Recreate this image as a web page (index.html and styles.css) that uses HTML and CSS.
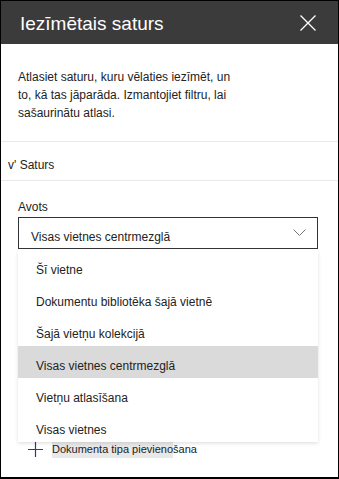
FILE: index.html
```html
<!DOCTYPE html>
<html lang="lv">
<head>
    <meta charset="UTF-8">
    <meta name="viewport" content="width=device-width, initial-scale=1.0">
    <title>Iezīmētais saturs</title>
    <link rel="stylesheet" href="styles.css">
</head>
<body>
    <div class="panel">
        <div class="panel-header">
            <h1>Iezīmētais saturs</h1>
            <button class="close" aria-label="Aizvērt">
                <svg width="16" height="16" viewBox="0 0 16 16">
                    <path d="M0.5 0.5 L15.5 15.5 M15.5 0.5 L0.5 15.5" stroke="#fff" stroke-width="1.3" fill="none"/>
                </svg>
            </button>
        </div>
        <p class="intro">Atlasiet saturu, kuru vēlaties iezīmēt, un to, kā tas jāparāda. Izmantojiet filtru, lai sašaurinātu atlasi.</p>
        <div class="section-toggle">v' Saturs</div>
        <div class="field">
            <label class="field-label">Avots</label>
            <div class="dropdown">
                <div class="dropdown-box">
                    <span>Visas vietnes centrmezglā</span>
                    <svg class="chevron" width="13" height="7" viewBox="0 0 13 7">
                        <path d="M0.5 0.5 L6.5 6.5 L12.5 0.5" stroke="#777" stroke-width="1" fill="none"/>
                    </svg>
                </div>
                <ul class="dropdown-list">
                    <li>Šī vietne</li>
                    <li>Dokumentu bibliotēka šajā vietnē</li>
                    <li>Šajā vietņu kolekcijā</li>
                    <li class="selected">Visas vietnes centrmezglā</li>
                    <li>Vietņu atlasīšana</li>
                    <li>Visas vietnes</li>
                </ul>
            </div>
            <div class="add-row">
                <svg class="plus" width="15" height="15" viewBox="0 0 15 15">
                    <path d="M7.5 0 V15 M0 7.5 H15" stroke="#2b3a80" stroke-width="1.2" fill="none"/>
                </svg>
                <span class="add-text"><span class="hover">Dokumenta tipa pievieno</span>šana</span>
            </div>
        </div>
    </div>
</body>
</html>
```

FILE: styles.css
```css
body {
    margin: 0;
    font-family: "Liberation Sans", Arial, sans-serif;
    color: #222;
}
.panel {
    box-sizing: border-box;
    width: 339px;
    height: 479px;
    border: 1px solid #000;
    border-bottom-width: 2px;
    background-color: #fff;
    overflow: hidden;
}
.panel-header {
    height: 43px;
    background-color: #3b3b3b;
    display: flex;
    align-items: center;
    justify-content: space-between;
    padding: 0 22px 0 19px;
}
.panel-header h1 {
    margin: 0;
    padding-top: 3px;
    font-size: 19px;
    line-height: 22px;
    font-weight: normal;
    color: #fff;
}
.close {
    border: none;
    background: none;
    padding: 0;
    width: 16px;
    height: 16px;
    display: flex;
}
.intro {
    margin: 24px 0 19px 17px;
    max-width: 222px;
    font-size: 12px;
    line-height: 18px;
}
.section-toggle {
    border-top: 1px solid #e9e9e9;
    border-bottom: 1px solid #e9e9e9;
    padding: 14px 7px 6px;
    font-size: 12px;
    line-height: 18px;
}
.field {
    padding: 0 20px 0 17px;
    font-size: 12px;
}
.field-label {
    display: block;
    margin-top: 17px;
    margin-bottom: 1px;
    line-height: 18px;
}
.dropdown {
    position: relative;
    width: 300px;
}
.dropdown-box {
    box-sizing: border-box;
    height: 32px;
    border: 1px solid #333;
    padding: 8px 11px 0 12px;
    line-height: 22px;
    display: flex;
    justify-content: space-between;
}
.chevron {
    margin-top: 3px;
}
.dropdown-list {
    position: absolute;
    left: 0;
    top: calc(100% + 1px);
    width: 300px;
    margin: 0;
    padding: 0;
    list-style: none;
    background-color: #fff;
    box-shadow: 0 1.6px 3.6px rgba(0, 0, 0, 0.13), 0 0.3px 0.9px rgba(0, 0, 0, 0.11);
    z-index: 2;
}
.dropdown-list li {
    box-sizing: border-box;
    height: 32px;
    padding: 9px 18px 0;
    line-height: 22px;
}
.dropdown-list .selected {
    background-color: #dadada;
}
.add-row {
    margin-top: 193px;
    display: flex;
    align-items: center;
    gap: 9px;
    padding-left: 10px;
    height: 15px;
}
.add-text {
    font-size: 11px;
    line-height: 15px;
}
.add-text .hover {
    background-color: #e8e8e8;
    display: inline-block;
    padding-bottom: 1px;
}
```
